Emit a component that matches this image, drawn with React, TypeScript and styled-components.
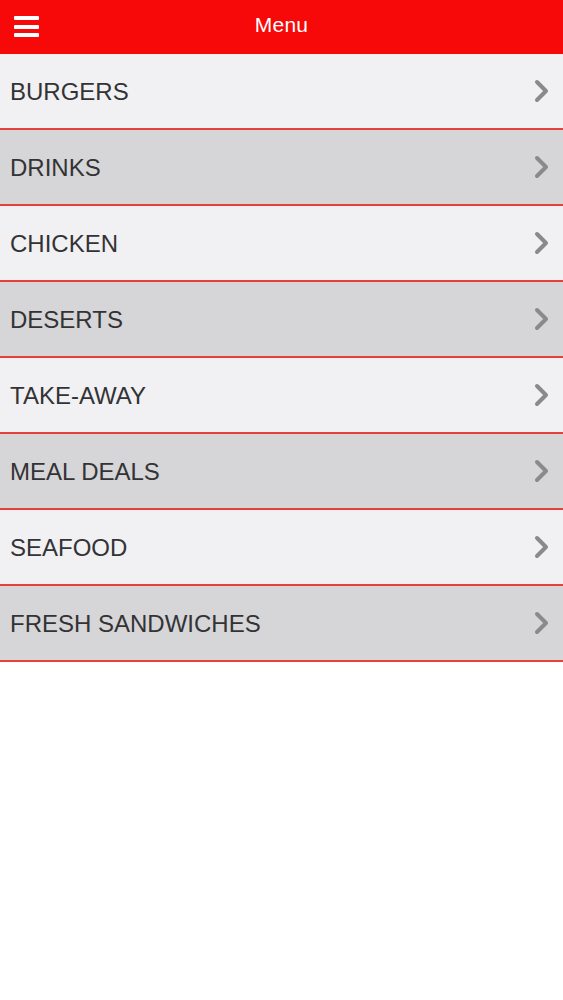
import React from 'react'
import styled, { createGlobalStyle } from 'styled-components'

const categories = [
  'BURGERS',
  'DRINKS',
  'CHICKEN',
  'DESERTS',
  'TAKE-AWAY',
  'MEAL DEALS',
  'SEAFOOD',
  'FRESH SANDWICHES',
]

const GlobalStyle = createGlobalStyle`
  html, body {
    margin: 0;
    padding: 0;
    background: #ffffff;
    font-family: 'Liberation Sans', Arial, Helvetica, sans-serif;
  }
`

const Chevron: React.FC<{}> = (): JSX.Element => (
  <svg width="16" height="24" viewBox="0 0 16 24" aria-hidden="true">
    <path
      d="M3 3 L12 12 L3 21"
      fill="none"
      stroke="#8a898c"
      strokeWidth="4"
      strokeLinecap="round"
      strokeLinejoin="round"
    />
  </svg>
)

const App: React.FC<{}> = (): JSX.Element => {
  return (
    <>
      <GlobalStyle />
      <Page>
        <TopBar>
          <MenuButton aria-label="Open navigation">
            <Bar />
            <Bar />
            <Bar />
          </MenuButton>
          <Title>Menu</Title>
        </TopBar>
        <List>
          {categories.map((name, i) => (
            <Row key={name} $shaded={i % 2 === 1}>
              <Label>{name}</Label>
              <Chevron />
            </Row>
          ))}
        </List>
      </Page>
    </>
  )
}

export default App

const Page = styled.div`
  width: 100%;
  min-height: 1000px;
  background: #ffffff;
`

const TopBar = styled.header`
  position: relative;
  height: 54px;
  background: #f70909;
  display: flex;
  align-items: center;
  justify-content: center;
`

const MenuButton = styled.div`
  position: absolute;
  left: 14px;
  top: 16px;
  width: 25px;
  height: 21px;
  display: flex;
  flex-direction: column;
  justify-content: space-between;
`

const Bar = styled.span`
  display: block;
  height: 4px;
  border-radius: 1px;
  background: #ffffff;
`

const Title = styled.h1`
  margin: 0;
  color: #ffffff;
  font-size: 21px;
  font-weight: normal;
  letter-spacing: 0.2px;
  margin-top: -5px;
`

const List = styled.ul`
  list-style: none;
  margin: 0;
  padding: 0;
`

const Row = styled.li<{ $shaded: boolean }>`
  height: 74px;
  box-sizing: content-box;
  display: flex;
  align-items: center;
  justify-content: space-between;
  padding: 0 13px 0 10px;
  background: ${(p) => (p.$shaded ? '#d6d5d7' : '#f1f0f2')};
  border-bottom: 2px solid #e5403b;
`

const Label = styled.span`
  color: #333336;
  font-size: 24px;
  margin-top: 1px;
`
